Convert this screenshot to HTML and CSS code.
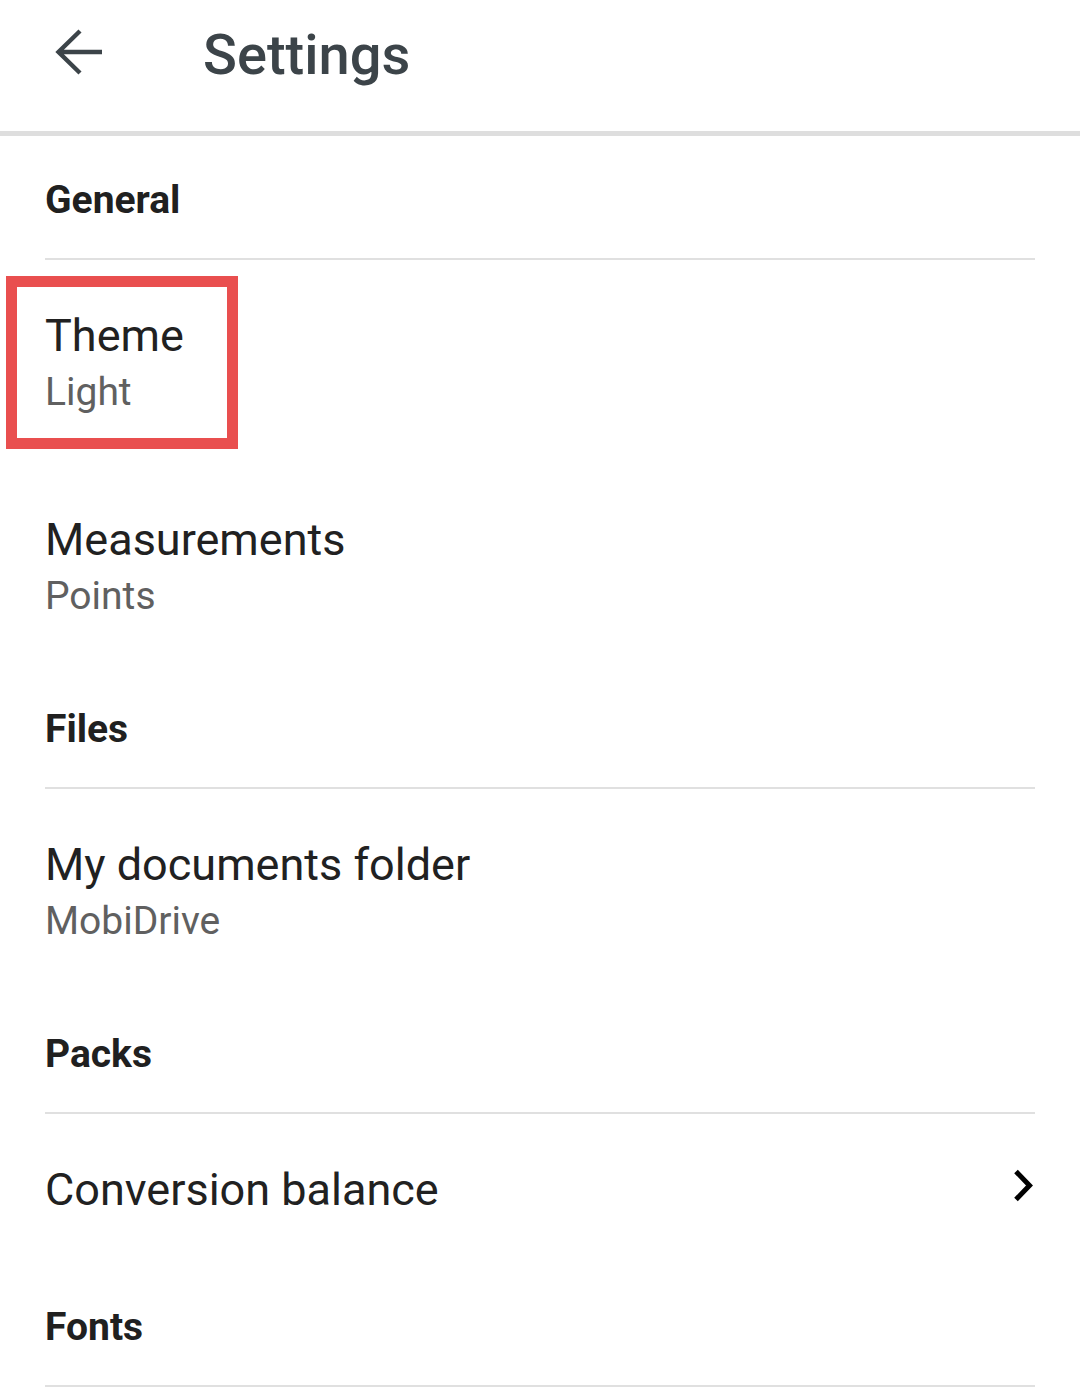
FILE: index.html
```html
<!DOCTYPE html>
<html lang="en">
<head>
<meta charset="utf-8">
<title>Settings</title>
<link rel="stylesheet" href="styles.css">
</head>
<body>
<header class="appbar">
  <svg class="back" width="52" height="48" viewBox="0 0 52 48" aria-label="Back">
    <path d="M26 3 L4.5 24 L26 45 M5 24 H48" fill="none" stroke="#3c4449" stroke-width="4.4" stroke-linejoin="miter"/>
  </svg>
  <h1 class="title">Settings</h1>
</header>
<main class="list">
  <div class="section">General</div>
  <div class="item">
    <div class="item-title">Theme</div>
    <div class="item-sub">Light</div>
    <div class="highlight"></div>
  </div>
  <div class="item">
    <div class="item-title">Measurements</div>
    <div class="item-sub">Points</div>
  </div>
  <div class="section">Files</div>
  <div class="item">
    <div class="item-title">My documents folder</div>
    <div class="item-sub">MobiDrive</div>
  </div>
  <div class="section">Packs</div>
  <div class="item item-single">
    <div class="item-title">Conversion balance</div>
    <svg class="chevron" width="24" height="56" viewBox="0 0 24 56">
      <path d="M5 9.5 L18.5 23.5 L5 37.5" fill="none" stroke="#000" stroke-width="5"/>
    </svg>
  </div>
  <div class="section">Fonts</div>
</main>
</body>
</html>
```
FILE: styles.css
```css
html, body {
  margin: 0;
  padding: 0;
  background: #ffffff;
}
body {
  font-family: Roboto, "Noto Sans", "Liberation Sans", sans-serif;
  color: #212121;
}
.appbar {
  display: flex;
  align-items: flex-start;
  height: 108px;
  padding: 23px 0 0 54px;
  border-bottom: 5px solid #dedede;
}
.back {
  margin-top: 5px;
  flex: none;
}
.title {
  margin: 0 0 0 97px;
  font-size: 56px;
  line-height: 64px;
  font-weight: 500;
  color: #3c4449;
}
.list {
  padding: 3px 45px 0 45px;
}
.section {
  padding: 37px 0 34px 0;
  font-size: 39px;
  line-height: 48px;
  font-weight: 700;
  color: #202020;
  border-bottom: 2px solid #e0e0e0;
}
.item {
  position: relative;
  padding: 48px 0 44px 0;
}
.item-single {
  display: flex;
  justify-content: space-between;
  align-items: flex-start;
  padding-bottom: 48px;
}
.item-title {
  font-size: 45px;
  line-height: 56px;
  color: #212121;
}
.item-sub {
  font-size: 39px;
  line-height: 56px;
  color: #606060;
}
.chevron {
  flex: none;
}
.highlight {
  position: absolute;
  left: -39px;
  top: 16px;
  width: 232px;
  height: 173px;
  box-sizing: border-box;
  border: 11px solid #e94f4f;
}
```
